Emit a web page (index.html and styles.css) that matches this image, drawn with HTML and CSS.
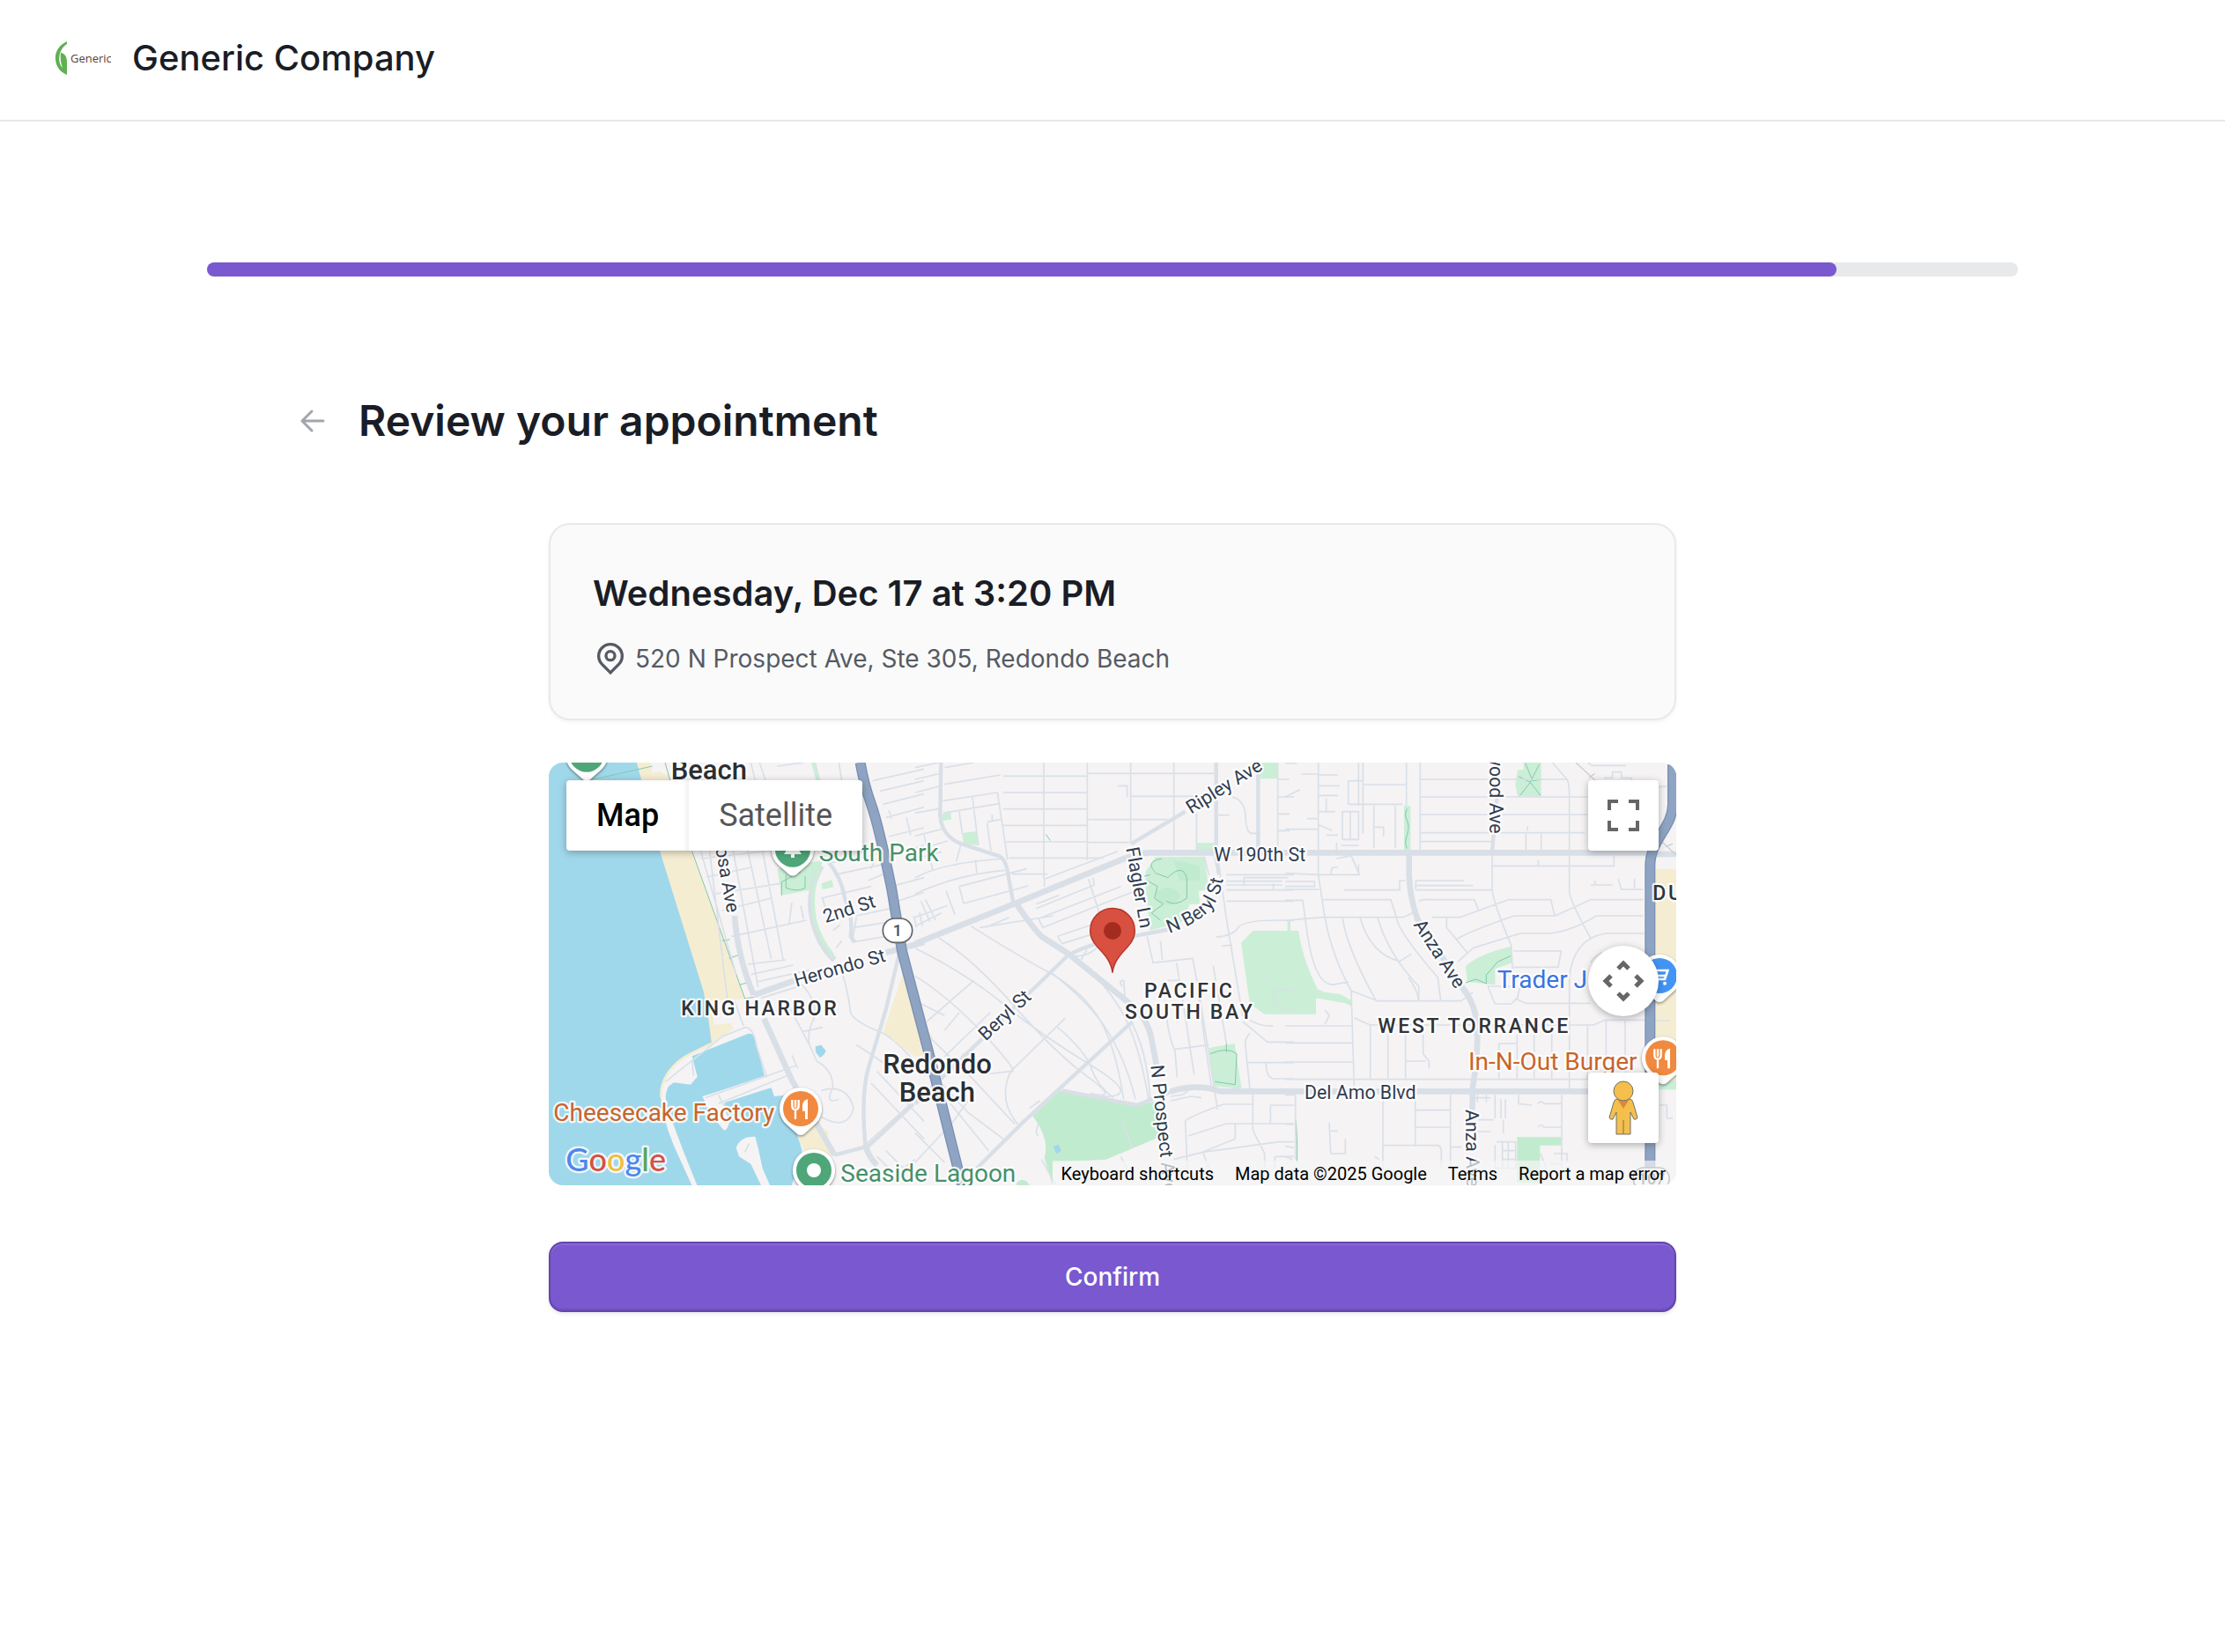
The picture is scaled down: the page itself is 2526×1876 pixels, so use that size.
FILE: index.html
```html
<!DOCTYPE html>
<html lang="en">
<head>
<meta charset="utf-8">
<meta name="viewport" content="width=device-width, initial-scale=1">
<title>Review your appointment</title>
<link rel="stylesheet" href="styles.css">
</head>
<body>
<header class="site-header">
  <svg class="logo" viewBox="0 0 64 48" aria-hidden="true">
    <path d="M14 5C5 9 0 17 1 26c1 9 6 14 13 17V29c0-5-1-8-4-10-2-1-3-1-3-2-1 6 0 13 2 18C3 29 4 14 14 8z" fill="#5fb053"/>
    <text class="logo-text" x="18" y="29">Generic</text>
  </svg>
  <span class="company">Generic Company</span>
</header>

<main class="page">
  <div class="progress" role="progressbar" aria-label="Booking progress" aria-valuenow="90" aria-valuemin="0" aria-valuemax="100">
    <div class="progress-fill" style="width:90%"></div>
  </div>

  <div class="title-row">
    <button class="back" type="button" aria-label="Back">
      <svg viewBox="0 0 48 48" aria-hidden="true"><path d="M36 24H12M23 13 12 24l11 11"/></svg>
    </button>
    <h1>Review your appointment</h1>
  </div>

  <div class="content">
    <section class="card">
      <h2>Wednesday, Dec 17 at 3:20 PM</h2>
      <p class="address">
        <svg viewBox="0 0 24 24" aria-hidden="true"><path d="M12 21.500 6.200 15.700a8 8 0 1 1 11.600 0z"/><circle cx="12" cy="10" r="3"/></svg>
        <span>520 N Prospect Ave, Ste 305, Redondo Beach</span>
      </p>
    </section>

    <section class="map" aria-label="Map">
      <svg class="map-canvas" viewBox="12 18 3840 1440" preserveAspectRatio="xMidYMid slice" aria-hidden="true">
        <defs>
          <path id="poi" d="M0-72A72 72 0 0 0-50 52L-12 86Q0 94 12 86L50 52A72 72 0 0 0 0-72Z"/>
          <g id="fork"><path d="M-29-30v22q0 10 11 12v32M-18-30v26M-7-30v22q0 10-11 12" fill="none" stroke="#fff" stroke-width="7"/><path d="M24-32v68H15V8H6v-18Q8-30 24-32z" fill="#fff"/></g>
          <path id="beryl" d="M865 600Q980 560 1020 500Q1045 460 1054 380"/>
        </defs>
        <rect class="land" x="0" width="3900" height="1500"/>

        <!-- West: ocean, beach and harbour -->
        <path class="sand" d="M312 18H410L500 320 682 822 560 830 575 912 630 905 642 925 567 975 500 900 250 18Z"/>
        <path class="land" d="M360 18h48l12 45-30-15-28 5z"/>
        <path class="water" d="M12 18H312L390 318 540 800 557 900 567 975 490 1015C420 1050 392 1110 395 1160 402 1230 440 1290 460 1350L500 1458H12Z"/>
        <path class="shore" d="M567 975 490 1012C420 1050 390 1110 395 1160"/>
        <path class="water" d="M500 1018 690 942Q712 938 716 965L747 1085 540 1155 560 1190 600 1180 770 1125 780 1155 830 1150 860 1290 875 1340 840 1458H517L470 1340 410 1180Q405 1118 440 1108L495 1115 518 1088Z"/>
        <path class="land" d="M535 1155 830 1070 855 1090 790 1150 770 1125 612 1165 610 1195 628 1240Q620 1275 608 1270L570 1225ZM650 1330Q665 1290 715 1292L725 1330 740 1400 765 1458H735L700 1385 660 1360Z"/>
        <path class="sand" d="M860 1295 900 1230 965 1275 960 1310 985 1350 900 1380ZM1220 730 1330 1040 1270 1010 1150 940Z"/>
        <path class="water" d="M920 985l20-5 16 20-6 12-14 12-15-20z"/>
        <path class="park" d="M790 380 945 350 915 450 805 470ZM940 430l36-12 6 24-38 8z"/>
        <path class="trail" d="M160 76 365 30M408 18l20 70M500 320 680 822l30-5M602 625l26-4M626 685l34-12M662 775l22-6M805 470V425L870 390M820 400v45q40 15 65 0v-40"/>
        <path class="minor" d="M560 320l60 500M640 318l85 465M690 318l80 370M740 318l70 370M530 320l120 420M530 345 770 318M550 408 700 375M580 465 800 430M602 522 770 480M635 610 890 555M690 705 820 690M700 740 845 708M720 765 900 725M735 820 880 775M880 780q50 60 35 110-25 50-15 90M820 830 900 980 925 1035q55 30 55 90-30 60 20 40M875 935l70-15M940 1135q90-25 110 60-20 80-110 30M1010 730q20 60 30 140 10 30 110 70 70 40 130 130M1060 980q50 30 90 60M1110 1110 1290 1300M1130 1070 1290 1240M1290 1140 1090 1320M1130 1360 1170 1400M1160 1340l60 60 40-30M645 830l30 85M755 1090 720 985Q710 920 680 920L605 950 410 1105M545 1160 855 1050M590 1180 835 1080M590 1150 615 1200M840 1015 860 1060M500 1030 505 1085M680 1345 695 1315M840 495 830 570M870 505 880 550M730 18l20 60M700 18l15 60M790 30 880 18M1000 18 1010 78M1060 540 1200 510M1050 580 1180 560M1045 630 1160 610M1060 545 1045 630M990 650 1010 625M980 590 1005 570M940 480 1110 440M945 480 960 540M985 400 1150 365M970 360 1130 330M1140 115 1290 80M1115 80 1290 40M1150 160 1290 125M1160 205 1290 170M1170 270 1290 240M1230 205 1245 265M1170 180 1180 210M1180 330 1290 300M1180 440 1290 410M1200 490 1290 460M1110 380 1125 345M1100 420 1170 390M1100 300 1115 345M1255 540 1265 580M1275 530 1285 575"/>
        <path class="mid" d="M915 18l30 120M960 350q50 60 60 130 30 70 20 130l15 20M1205 670 1160 860 1100 1060Q1075 1150 1090 1320M985 1355 1100 1325 1255 1180"/>
        <path class="road" d="M645 540Q655 680 710 810M710 810 850 760M1160 665 1290 630M745 890 840 1100 985 1355M940 370Q890 460 910 550 930 640 985 690M1090 1320Q1100 1360 1130 1390"/>
        <path class="greenway" d="M935 370Q900 460 918 555 935 620 980 675M912 18 928 78"/>
        <path class="breakwater" d="M402 1160Q410 1240 450 1330L508 1458"/>

        <!-- Centre: Redondo Beach and Pacific South Bay -->
        <g transform="translate(1260)">
          <path class="sand" d="M-40 745-20 850 60 950 50 1010 0 1020-80 960Z"/>
          <path class="park" d="M818 340 985 338 1000 450 965 455 970 500 935 500 910 560 800 590 785 440 785 390ZM160 258 210 252 218 300 165 295ZM90 195l30-8 4 24-30 6zM960 292h60v26h-60zM1175 18h58v55h-58zM1000 990 1088 975 1112 1130 1015 1120ZM1110 632 1150 591H1305Q1320 690 1370 790L1480 840 1365 820V875H1190L1140 840ZM1268 556h10v40h-10z"/>
          <path class="park dark" d="M400 1222 495 1135 755 1185 830 1170 840 1290 650 1370 468 1380V1458L440 1365Q460 1300 400 1222ZM345 1450q25-25 45 8h-45zM880 350l90 20v50l-70 0zM820 460q50-40 85 10-20 50-85 20z"/>
          <path class="water" d="M470 1325l18-6 10 22-18 10z"/>
          <path class="trail" d="M840 345q-60 10-20 50l40 15q50-50 65 0v70q-40 30-70 10M790 420l35 20-10 40 30 20-40 30 30 25M800 400l-20 5M1005 1010q60-25 90 0l-5 105-70-10M1060 1005V975M445 262l15 22"/>
          <path class="minor" d="M438 18V415M586 18V350M734 18V290M881 18V318M958 190V318M1235 18V318M586 55H1030M734 133H1025M586 212H860M300 120H586M300 176H586M300 232H586M310 288H586M586 290H730M320 343H640M330 398H450M300 64H586M95 148 280 120 315 350M95 190 285 158M100 92 290 60M100 35 200 18M150 185 160 260M195 135 215 300M245 220 290 212M262 195V215M245 225 258 320M0 35 80 18M0 75 85 55M0 120 85 98M0 190 80 175M0 268 90 245M0 345 90 322M60 300 110 285M60 385 30 265M0 410Q90 360 300 345M0 465Q140 400 305 385M150 440 380 380M150 440 165 498 385 438M210 395 205 350M140 355 155 300M440 415 690 320M440 440V415M105 455 135 535M20 490 50 560M35 485 70 555M0 545 110 505M0 575 90 530M80 615Q200 690 340 850T590 1090 595 1145M0 650Q180 740 300 840T600 1050 635 1155M190 575Q340 670 450 730T620 880 710 1165M465 735Q600 840 660 940T750 1165M545 680Q640 760 700 860T795 1165M485 920Q580 1000 600 1060T675 1160M735 900Q790 1000 800 1160M0 745Q120 820 240 950T325 1070L510 890M325 1070Q280 1170 350 1250M100 1020 255 870M150 870 100 930M160 1010 235 1080 325 1070M40 900 200 760M20 840 100 880M45 950 200 1100 340 1250M80 1130 250 1340M60 1080 180 1210 300 1300M180 1170 130 1240M0 1280 100 1380M0 1380 130 1240M220 580 470 540M240 580 320 545M412 500 490 470M412 515 610 435 605 410M420 550 700 440M435 580 750 455M420 550 435 580M485 610 720 530M500 635 740 560M485 610 500 635M590 415 630 540M520 675Q600 690 640 620M565 690 585 655M705 780q-15-20 5-20l5 65M790 610 810 700 945 685 965 790 1030 1200M835 625 842 690M890 700 900 760 860 760M850 830Q860 950 885 1000L892 1090M910 820 950 1080M965 820 1010 1130M1015 710 1060 975M880 995 1000 980M1030 335 1060 550 1115 880Q1170 920 1220 915M1060 490H1290M1025 612Q1080 610 1100 580T1290 556M1045 642 1080 640M1060 400H1290M1060 422H1250M1060 452H1290M1060 435H1250M1120 435V410H1270M1220 452V430M1115 900 1200 970H1290M1140 940Q1120 960 1125 985L1140 1130M1135 1040H1290M1195 1040q0 50 25 55h70M930 1480 920 1240Q930 1225 1050 1182H1150M930 1290 1060 1248H1290M1090 1250V1300L980 1345 1000 1400M880 1370 980 1345M980 1345 1240 1310H1290M1150 1130V1270L1190 1350V1400M1210 1185H1290M1210 1185V1248M700 1360 740 1440M870 1155 910 1150 930 1135M870 1170 940 1155 975 1160M1080 135q40 10 45 60 0 60 20 64h30M1030 197H1070M1235 75H1275M1235 135H1290M1235 193H1275M1235 250H1275M690 97H722V135M430 1370 480 1458M420 1250q-15 30 0 40M390 1195 425 1170M1225 1360V1400M1225 1360H1290M985 338 1000 400"/>
          <path class="mid" d="M88 18 85 200Q90 265 150 292L280 335Q310 340 318 410L335 500M210 1400 360 1250 740 900M520 675 0 1180M520 675Q600 630 740 610L870 585M735 295 920 185M500 1135 755 1185 870 1140Q960 1105 1040 1140M1025 18V320M1168 50V318M1020 320 1035 400"/>
          <path class="road" d="M0 635 330 502 700 350Q760 325 800 325H1290M345 500Q400 580 430 610L520 668 720 830Q790 880 805 960L822 1050M870 1138Q960 1110 1040 1138H1290"/>
          <path class="minor" d="M1225 830q-15-40 30-40l35 10M1225 830l30 28 35 0M705 1245 740 1330"/>
        </g>

        <!-- East: West Torrance -->
        <g transform="translate(2520)">
          <path class="sand" d="M1262 380H1340V1110H1262Z"/>
          <path class="park" d="M405 165h22v150h-22zM812 18h60v115h-80l-8-40 8-50h20zM615 712Q660 670 768 645L775 700 715 720V775L620 765ZM100 795 190 808 228 830V848L180 825 100 820ZM1265 1110 1332 1100V1132H1265Z"/>
          <path class="park dark" d="M790 1294H940V1322H868V1450H790Z"/>
          <path class="trail" d="M415 175q-10 20 0 40t0 50 0 45M795 65l40 20 30-60M800 130l35-45 35 45M818 20l25 60 30-5M615 768l35-12 35 15v-30l40-45 45-20M35 1230q8 60 5 150"/>
          <path class="minor" d="M113 18V400L135 545Q160 680 225 795L235 1120M265 18V260M265 93H410M215 160H400M215 160V80H265M413 18V165M460 18V318M460 75H960M460 135H1030M460 195H1030M460 257H1020M460 287H705M302 165V310M375 165V310M195 185h55v95h-55zM222 185V280M250 18V165M55 57H110M115 60H180M115 97H185M115 130H180M115 185H170M75 209H110M0 245H110M140 140V190M115 230 160 250M140 265H180M190 300H250M175 290V320M0 135 50 110M0 20H40M305 238H335V270M825 235V250M820 260V318M872 260V318M760 257H1020M910 18 960 75Q968 90 968 130V460Q975 500 1040 615M705 330V450Q710 500 770 640L778 780M705 370H1120V330M862 350V370M1030 18 1045 28H1160M1085 70h30V50h30v20h35v35M1270 100H1300M0 395 115 400M0 423H100V440H0M0 450H115M115 400H250V365M175 345l50-10 28 65H155l5-25 20 0M0 487H60L75 600Q100 770 160 775L215 765M125 485H360L380 550Q390 600 520 750L530 830M0 556Q60 550 130 545H400L435 530M195 545Q210 650 310 830H600L640 800M255 545Q290 670 390 695L430 670M315 545Q350 670 455 780V830M420 750Q450 790 455 830M200 452H390V420H410M445 420H610M445 437H640M445 452H705M445 420V450M455 490Q470 482 490 485H645L658 520M500 545H595L760 485H905L918 540M550 545V580L620 665M585 620Q620 595 780 540H920L1040 485H1220M590 695 640 650 800 600H900Q970 595 1060 540H1220M1225 600H1090Q980 620 968 750V1130M778 660H940L930 715H778M800 780 790 825 820 838H1040M690 780 715 840H770L790 820M690 780H770M1040 700Q1050 680 1080 665M225 795 315 830M235 888 290 912H1050L1090 895H1225M290 912V1095M350 912V1095M410 912V1095M470 945V1010L490 1035V1060M412 1035H480M230 973H0M0 915H225M0 1038H230M0 1097H1225M728 975V1095M728 975H790M790 945V1095M848 945V1095M908 912V1095M1030 912V1095M1093 895V1095M1158 895V1095M135 860 150 880 135 910M1040 435H1115M1055 420V435M1135 415 1145 450H1220M1190 415V450M1258 897H1310M0 1150H35V1370M0 1250H30M150 1245 155 1350H205V1300M155 1273H180M333 1150V1400M443 1150V1320M443 1202H560M443 1260H560M563 1150V1400M563 1328H600M335 1322H520Q532 1325 532 1345V1400M640 1160H700M715 1150V1230M735 1165V1230M750 1165V1230M743 1235V1280M660 1235H710M650 1275H700M655 1150V1175M685 1150V1175M795 1150V1180L840 1185M860 1180q15-15 20 0h60M860 1260q15-15 20 0h60M942 1150V1400M720 1310H785V1400H715V1320M740 1310V1400M760 1310V1400M740 1340H785M740 1370H785M870 1350 890 1400M915 1350H960V1380M900 1385H940M305 1360 320 1370M1275 1185H1300V1230H1320M0 1325 30 1330M0 1360 25 1370"/>
          <path class="mid" d="M722 130 705 320M638 1130 635 1250M640 1130 655 1000 650 940"/>
          <path class="road" d="M75 325H1225M422 330V400Q425 480 450 550L600 780Q660 850 655 960L650 1050 638 1130V1200M0 1138H1225M1225 330H1340"/>
          <path class="rail" d="M990 18 1340 340M1035 70 1055 55M1295 305 1320 295"/>
          <path class="highway-edge" d="M1320 25V160C1320 240 1243 280 1243 370V1458"/>
          <path class="highway" d="M1320 25V160C1320 240 1243 280 1243 370V1458"/>
        </g>

        <path class="highway-edge" d="M1073 18Q1085 90 1110 160T1180 450L1215 660 1315 1040 1405 1400 1420 1458"/>
        <path class="highway" d="M1073 18Q1085 90 1110 160T1180 450L1215 660 1315 1040 1405 1400 1420 1458"/>

        <!-- Labels -->
        <g class="street">
          <text transform="translate(580 310) rotate(80)">osa Ave</text>
          <text transform="translate(955 565) rotate(-18)">2nd St</text>
          <text transform="translate(855 782) rotate(-16)">Herondo St</text>
          <text transform="translate(1500 968) rotate(-43)">Beryl St</text>
          <text transform="translate(2200 194) rotate(-32)">Ripley Ave</text>
          <text x="2278" y="353">W 190th St</text>
          <text transform="translate(1978 310) rotate(80)">Flagler Ln</text>
          <text transform="translate(2062 1050) rotate(84)">N Prospect Ave</text>
          <text transform="translate(3216 -18) rotate(90)">wood Ave</text>
          <text transform="translate(2956 570) rotate(57)">Anza Ave</text>
          <text transform="translate(3134 1200) rotate(89)">Anza Ave</text>
          <text x="2586" y="1163">Del Amo Blvd</text>
          <g transform="translate(1260)"><text><textPath href="#beryl">N Beryl St</textPath></text></g>
        </g>
        <g class="district">
          <text x="463" y="880">KING HARBOR</text>
          <text x="2040" y="820">PACIFIC</text>
          <text x="1974" y="892">SOUTH BAY</text>
          <text x="2836" y="940">WEST TORRANCE</text>
          <text x="3772" y="485">DU</text>
        </g>
        <g class="city">
          <text x="428" y="75">Beach</text>
          <text x="1150" y="1078">Redondo</text>
          <text x="1205" y="1174">Beach</text>
        </g>
        <g class="place">
          <text class="food" x="28" y="1238">Cheesecake Factory</text>
          <text class="food" x="3144" y="1064">In-N-Out Burger</text>
          <text class="green" x="932" y="353">South Park</text>
          <text class="green" x="1006" y="1447">Seaside Lagoon</text>
          <text class="shop" x="3242" y="785">Trader J</text>
        </g>
        <rect x="1150" y="549" width="100" height="82" rx="40" fill="#fff" stroke="#5f6368" stroke-width="5"/>
        <text class="shield" x="1184" y="609">1</text>
        <rect x="3706" y="1398" width="122" height="76" rx="36" fill="#fff" stroke="#5f6368" stroke-width="5"/>
        <text class="shield" x="3722" y="1454">107</text>

        <!-- Place pins -->
        <g class="pin" transform="translate(141 -10)"><use href="#poi"/><circle r="60" fill="#4fa679"/></g>
        <g class="pin" transform="translate(843 314)"><use href="#poi"/><circle r="60" fill="#4fa679"/><path d="M-30 16 0-30 30 16H6v12H-6V16z" fill="#fff"/></g>
        <g class="pin" transform="translate(870 1197)"><use href="#poi"/><circle r="60" fill="#f08a40"/><use href="#fork"/></g>
        <g class="pin" transform="translate(915 1407)"><use href="#poi"/><circle r="60" fill="#4fa679"/><circle r="24" fill="#fff"/></g>
        <g class="pin" transform="translate(3795 744)"><use href="#poi"/><circle r="60" fill="#4395f5"/><path d="M-36-18H28L18 12H-22M-16 0H20" fill="none" stroke="#fff" stroke-width="8"/><circle cx="-14" cy="26" r="6" fill="#fff"/><circle cx="18" cy="26" r="6" fill="#fff"/></g>
        <g class="pin" transform="translate(3807 1024)"><use href="#poi"/><circle r="60" fill="#f08a40"/><use href="#fork"/></g>

        <!-- Appointment marker -->
        <path d="M1932 734C1922 660 1856 650 1856 590A76 76 0 0 1 2008 590C2008 650 1942 660 1932 734Z" fill="#d8503f" stroke="#b3312a" stroke-width="4"/>
        <circle cx="1932" cy="591" r="30" fill="#a42b20"/>
        <text class="google" x="70" y="1410"><tspan fill="#5086ec">G</tspan><tspan fill="#d94f43">o</tspan><tspan fill="#f2bd42">o</tspan><tspan fill="#5086ec">g</tspan><tspan fill="#58a55c">l</tspan><tspan fill="#d94f43">e</tspan></text>
      </svg>

      <div class="map-top">
        <div class="map-type">
          <button class="type-option selected" type="button">Map</button>
          <button class="type-option" type="button">Satellite</button>
        </div>
        <button class="control" type="button" aria-label="Toggle fullscreen">
          <svg viewBox="0 0 36 36" width="36" height="36" fill="none" stroke="#666" stroke-width="4" aria-hidden="true"><path d="M2 12V2h10M24 2h10v10M34 24v10H24M12 34H2V24"/></svg>
        </button>
      </div>
      <div class="map-side">
        <button class="control round" type="button" aria-label="Map camera controls">
          <svg viewBox="0 0 48 48" width="48" height="48" fill="none" stroke="#666" stroke-width="5" aria-hidden="true"><path d="m18 10 6-6 6 6M18 38l6 6 6-6M10 18l-6 6 6 6M38 18l6 6-6 6"/></svg>
        </button>
        <button class="control" type="button" aria-label="Street View">
          <svg viewBox="0 0 34 62" width="34" height="62" stroke="#73706a" stroke-width="1" aria-hidden="true"><path d="M10 21h14q3 0 4 4l5 17q-1 3-4 2l-4-8v25H9V36l-4 8q-3 1-4-2l5-17q1-4 4-4z" fill="#f4bf4b"/><path d="M10 21h14l-7 11z" fill="#d78a3e" stroke="none"/><path d="M17 45v16" fill="none"/><circle cx="17" cy="12" r="11" fill="#f4bf4b"/></svg>
        </button>
      </div>
      <div class="attribution">
        <button type="button">Keyboard shortcuts</button>
        <span>Map data ©2025 Google</span>
        <a href="#terms">Terms</a>
        <a href="#report">Report a map error</a>
      </div>
    </section>

    <button class="confirm" type="button">Confirm</button>
  </div>
</main>
</body>
</html>
```
FILE: styles.css
```css
* { box-sizing: border-box; }

body {
  margin: 0;
  background: #fff;
  color: #1a1d26;
  font-family: Inter, sans-serif;
}

button { font: inherit; border: 0; padding: 0; cursor: pointer; }
h1, h2, p { margin: 0; }

.site-header {
  display: flex;
  align-items: center;
  gap: 24px;
  padding: 42px 62px 46px;
  border-bottom: 2px solid #e8e8e8;
}
.logo { width: 64px; height: 48px; }
.logo-text { font: 13px "Open Sans", sans-serif; fill: #5b4037; }
.company { font-size: 40px; line-height: 48px; font-weight: 500; }

.page {
  max-width: 2056px;
  margin: 0 auto;
  padding: 160px 0;
}
.progress { height: 16px; border-radius: 8px; background: #e8e9eb; }
.progress-fill { height: 100%; border-radius: 8px; background: #7a58d0; }

.title-row {
  display: flex;
  align-items: center;
  gap: 28px;
  margin: 132px 96px 84px;
}
.back { display: flex; background: none; }
.back svg {
  width: 48px; height: 48px;
  fill: none; stroke: #a3a5ad; stroke-width: 3; stroke-linecap: round; stroke-linejoin: round;
}
h1 { font-size: 48px; line-height: 64px; font-weight: 600; }

.content {
  display: flex;
  flex-direction: column;
  max-width: 1280px;
  margin: 0 auto;
}
.card {
  padding: 50px 48px 48px;
  border: 2px solid #e8e9eb;
  border-radius: 24px;
  background: #fafafa;
  box-shadow: 0 2px 4px rgba(0, 0, 0, .05);
}
h2 { font-size: 40px; line-height: 56px; font-weight: 600; }
.address {
  display: flex;
  align-items: center;
  gap: 8px;
  margin-top: 26px;
  color: #555a65;
  font-size: 28px;
  line-height: 40px;
}
.address svg { width: 40px; height: 40px; fill: none; stroke: currentColor; stroke-width: 2; }

.map {
  position: relative;
  height: 480px;
  margin-top: 48px;
  border-radius: 16px;
  overflow: hidden;
  font-family: Roboto, sans-serif;
}
.map-canvas { display: block; width: 100%; height: 100%; }
.land { fill: #f5f3f4; }
.water { fill: #a0d8eb; }
.sand { fill: #f5edd2; }
.park { fill: #cbeed7; }
.dark { fill: #c1ebce; }
.shore, .breakwater, .trail, .minor, .mid, .road, .greenway, .rail, .highway, .highway-edge { fill: none; stroke-linejoin: round; }
.shore { stroke: #f5edd2; stroke-width: 8; }
.breakwater { stroke: #f5f3f4; stroke-width: 16; }
.trail { stroke: #84c8aa; stroke-width: 3; }
.minor { stroke: #d9e0e8; stroke-width: 5; }
.mid { stroke: #d9dfe7; stroke-width: 13; }
.road { stroke: #d9dfe7; stroke-width: 20; }
.greenway { stroke: #cbeed7; stroke-width: 12; }
.rail { stroke: #ccced0; stroke-width: 4; }
.highway-edge { stroke: #7890b5; stroke-width: 36; }
.highway { stroke: #8fa4c2; stroke-width: 28; }

.map-canvas text { paint-order: stroke; stroke: #fff; stroke-opacity: .85; stroke-width: 14px; stroke-linejoin: round; }
.street { font-size: 64px; fill: #303c50; }
.district { font-size: 69px; font-weight: 500; letter-spacing: 8px; fill: #303338; }
.city { font-size: 93px; font-weight: 500; fill: #2b2e33; }
.place { font-size: 84px; }
.food { fill: #c9642a; }
.green { fill: #46906a; }
.shop { fill: #3b74e0; }
.shield { font-size: 54px; font-weight: 500; fill: #4b4f54; }
.google { font-family: Lato, sans-serif; font-size: 108px; font-weight: 500; }
.pin { fill: #fff; filter: drop-shadow(0 4px 4px rgba(0, 0, 0, .45)); }

.map-top {
  position: absolute;
  top: 20px; left: 20px; right: 20px;
  display: flex;
  justify-content: space-between;
}
.map-type { display: flex; border-radius: 4px; box-shadow: 0 2px 8px rgba(0, 0, 0, .3); }
.type-option {
  padding: 0 34px;
  line-height: 80px;
  background: #fff;
  color: #565656;
  font-size: 36px;
  border-radius: 0 4px 4px 0;
}
.selected { color: #000; font-weight: 500; border-radius: 4px 0 0 4px; box-shadow: inset -3px 0 4px rgba(0, 0, 0, .06); }
.control {
  display: grid;
  place-items: center;
  width: 80px; height: 80px;
  background: #fff;
  border-radius: 4px;
  box-shadow: 0 2px 8px rgba(0, 0, 0, .3);
}
.round { border-radius: 50%; }
.map-side {
  position: absolute;
  right: 20px; bottom: 48px;
  display: grid;
  gap: 64px;
}
.attribution {
  position: absolute;
  right: 0; bottom: 0;
  display: flex;
  gap: 24px;
  padding: 2px 12px 0 10px;
  background: rgba(245, 245, 245, .7);
  color: #000;
  font-size: 20px;
  line-height: 26px;
}
.attribution button { background: none; color: inherit; }
.attribution a { color: inherit; text-decoration: none; }

.confirm {
  height: 80px;
  margin-top: 64px;
  border: 2px solid #6246ab;
  border-radius: 16px;
  background: #7a58d0;
  color: #fff;
  font-size: 28px;
  font-weight: 500;
  box-shadow: inset 0 2px 0 #8869da, inset 0 -2px 0 #7150c0, 0 2px 4px rgba(0, 0, 0, .1);
}
```
